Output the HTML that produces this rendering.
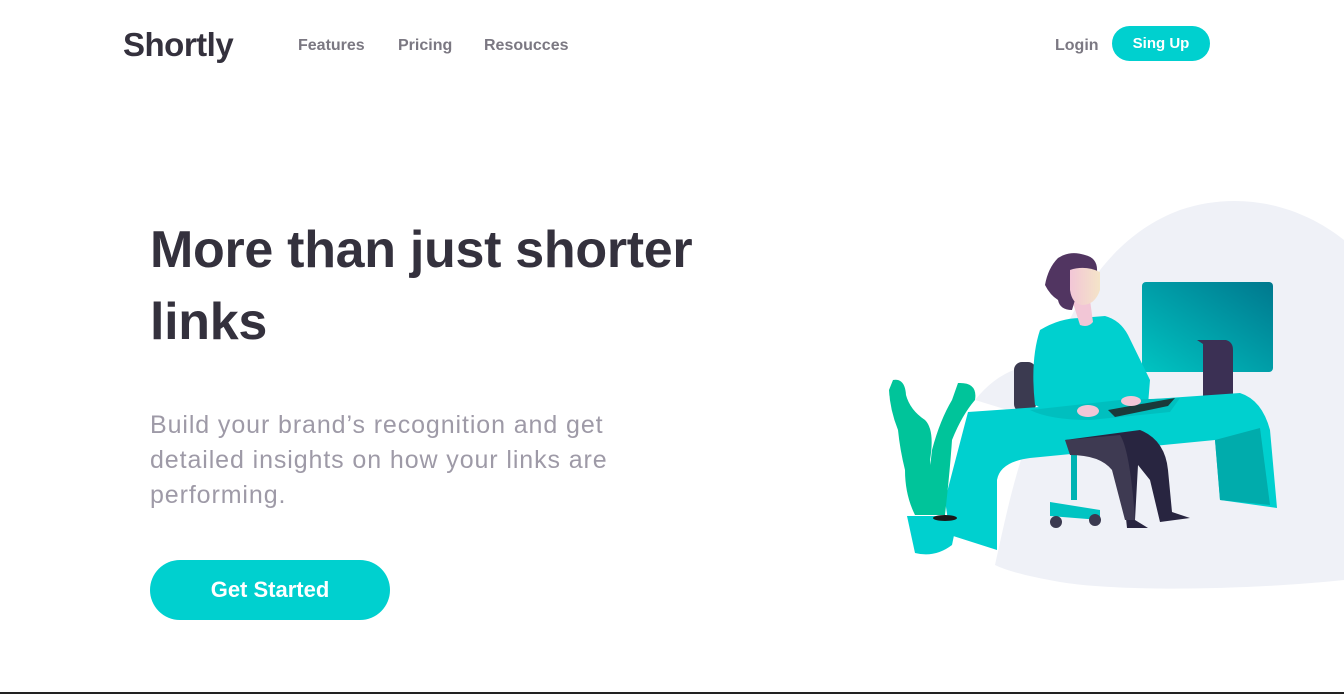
<!DOCTYPE html>
<html><head><meta charset="utf-8"><style>
*{margin:0;padding:0;box-sizing:border-box}
body{width:1344px;height:694px;overflow:hidden;background:#fff;font-family:"Liberation Sans",Arial,sans-serif;position:relative}
.a{position:absolute;white-space:nowrap}
.logo{left:123px;top:26px;font-size:33px;font-weight:bold;color:#34313d;letter-spacing:-0.5px}
.nav{top:37px;font-size:16px;font-weight:bold;color:#7b7882}
h1{position:absolute;left:150px;top:214px;font-size:52px;line-height:72px;font-weight:bold;color:#34313d;letter-spacing:-0.3px;white-space:nowrap}
p{position:absolute;left:150px;top:408px;font-size:25px;line-height:35px;color:#9e9aa7;white-space:nowrap;letter-spacing:0.9px}
.btn{background:#00d0cf;color:#fff;font-weight:bold;border-radius:30px;text-align:center}
</style></head><body>
<div class="a logo">Shortly</div>
<div class="a nav" style="left:298px">Features</div>
<div class="a nav" style="left:398px">Pricing</div>
<div class="a nav" style="left:484px">Resoucces</div>
<div class="a nav" style="left:1055px">Login</div>
<div class="a btn" style="left:1112px;top:26px;width:98px;height:35px;line-height:35px;font-size:15px">Sing Up</div>
<h1>More than just shorter<br>links</h1>
<p>Build your brand’s recognition and get<br>detailed insights on how your links are<br>performing.</p>
<div class="a btn" style="left:150px;top:560px;width:240px;height:60px;line-height:60px;font-size:22px">Get Started</div>
<svg class="a" style="left:0;top:0" width="1344" height="694" viewBox="0 0 1344 694">
<defs>
<linearGradient id="m" x1="0" y1="1" x2="1" y2="0"><stop offset="0" stop-color="#00c4c2"/><stop offset="1" stop-color="#00788e"/></linearGradient>
<linearGradient id="f" x1="0" x2="1"><stop offset="0" stop-color="#f2c6d6"/><stop offset="1" stop-color="#f4e4c8"/></linearGradient>
</defs>
<path d="M995 565 C1005 520 1015 470 1035 420 C1060 320 1100 240 1180 210 C1240 190 1300 205 1344 240 L1344 580 C1250 590 1120 592 1060 582 C1025 576 1005 570 995 565Z" fill="#eff1f7"/>
<path d="M975 400 Q995 375 1020 368 L1040 420 Z" fill="#eff1f7"/>
<rect x="1142" y="282" width="131" height="90" rx="4" fill="url(#m)"/>
<path d="M1197 340 L1226 340 Q1233 342 1233 350 L1233 403 L1197 404 L1203 400 L1203 344 Z" fill="#3b3054"/>
<rect x="1014" y="362" width="22" height="50" rx="8" fill="#3b3a50"/>
<path d="M968 412 L1240 393 Q1262 400 1270 430 L1277 508 L1220 500 L1215 440 L1030 458 Q1000 462 997 480 L997 550 L950 535 L945 500 Z" fill="#00d0cf"/>
<path d="M1215 440 L1260 428 L1270 505 L1220 500 Z" fill="#00acac"/>
<rect x="1071" y="445" width="6" height="55" fill="#00b3b3"/>
<path d="M1050 502 L1100 510 L1100 520 L1050 516 Z" fill="#00c4c2"/>
<circle cx="1056" cy="522" r="6" fill="#3b3a50"/><circle cx="1095" cy="520" r="6" fill="#3b3a50"/>
<path d="M1065 440 L1140 430 Q1165 440 1168 470 L1172 512 L1190 518 L1160 522 L1150 480 L1138 465 L1135 520 L1148 528 L1127 528 L1122 480 L1105 450 Z" fill="#282540"/>
<path d="M1065 440 L1120 435 Q1130 450 1135 520 L1125 520 L1112 470 Q1100 455 1070 455 Z" fill="#3e3a52"/>
<path d="M1040 330 Q1060 318 1080 318 L1105 316 Q1120 320 1128 335 L1150 380 L1148 405 L1060 418 L1035 405 Q1030 360 1040 330Z" fill="#00d0cf"/>
<path d="M1030 410 L1120 400 L1180 398 L1170 412 L1090 420 Q1050 420 1030 410Z" fill="#00bfbf"/>
<path d="M1108 410 L1175 398 L1168 406 L1115 417Z" fill="#1a3a3a"/>
<ellipse cx="1088" cy="411" rx="11" ry="6" fill="#f2c6d6"/><ellipse cx="1131" cy="401" rx="10" ry="5" fill="#f2c6d6"/>
<path d="M1072 300 L1090 300 L1093 322 Q1088 328 1080 325 Z" fill="#f2c6d6"/>
<path d="M1058 258 Q1070 250 1085 255 Q1098 258 1097 272 L1075 300 L1072 310 Q1060 310 1058 300 Q1050 295 1045 285 Q1048 268 1058 258Z" fill="#513561"/>
<path d="M1070 270 Q1085 265 1100 272 L1100 290 Q1095 305 1082 305 Q1072 304 1070 290 Z" fill="url(#f)"/>
<path d="M893 380 Q905 378 906 395 Q910 410 925 420 Q935 430 930 460 L935 515 L915 515 Q905 495 905 470 Q900 450 898 430 Q890 410 889 390Z" fill="#00c49a"/>
<path d="M958 383 Q978 382 975 400 Q962 415 952 440 Q950 470 945 515 L930 515 Q928 480 932 450 Q940 420 952 400Z" fill="#00c49a"/>
<path d="M907 516 L958 516 L952 545 Q935 558 915 553 Z" fill="#00d0cf"/>
<ellipse cx="945" cy="518" rx="12" ry="3" fill="#1a1a1a"/>
<rect x="0" y="692" width="1344" height="2" fill="#222"/>
</svg>
</body></html>
